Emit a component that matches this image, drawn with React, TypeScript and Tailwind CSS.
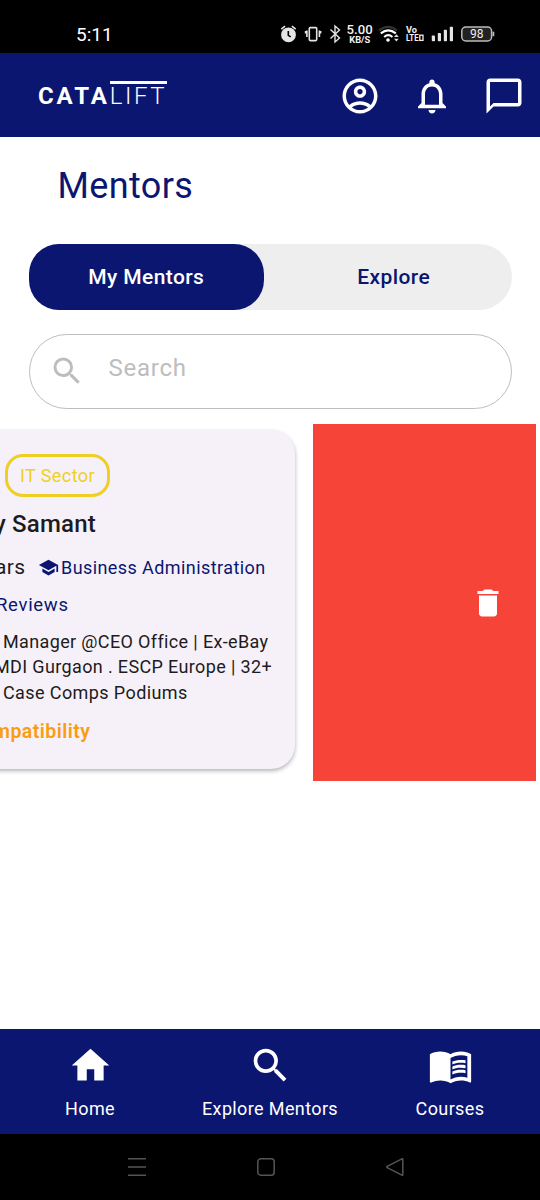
import React from "react";
import {
  MdOutlineAccountCircle,
  MdNotificationsNone,
  MdChatBubbleOutline,
  MdSearch,
  MdHome,
  MdMenuBook,
  MdSchool,
  MdDelete,
} from "react-icons/md";

function StatusBar() {
  return (
    <div className="flex h-[53px] shrink-0 items-end bg-black pb-[5px] pl-[76px] text-white">
      <span className="mb-[4px] w-[203px] text-[19px] leading-[19px] tracking-[0px]">5:11</span>
      <svg className="h-[28px] w-[218px]" viewBox="279 20 218 28" fill="none">
        <g stroke="#e4e4e4" strokeWidth="1.6">
          <circle cx="288.5" cy="34.8" r="7.4" fill="#e4e4e4" stroke="none" />
          <path d="M281.3 29.2l3.8-3M295.7 29.2l-3.8-3" />
          <path d="M288.3 31v4.3l2.4 1.6" stroke="#000" />
          <rect x="309.3" y="27.6" width="7.4" height="13" rx="1" />
          <path d="M306.9 30.5v6.4M319.4 30.5v6.4M305.6 31v2.5M320.6 31v2.5" />
        </g>
        <path d="M330.5 29.5l9 8.5-4.5 4V26l4.5 4-9 8.5" stroke="#e4e4e4" strokeWidth="1.4" />
        <g stroke="#fff" strokeWidth="2.1">
          <path d="M379 30.6q9-7.4 18 0" stroke="#333" />
          <path d="M380.8 33.4q7.5-6.2 15 0" />
          <path d="M384.2 37q4.1-3.6 8.2 0" />
        </g>
        <circle cx="388" cy="40" r="1.8" fill="#fff" />
        <path d="M394 37l2.4-2.8 2.4 2.8zM394 38.8l2.4 2.8 2.4-2.8z" fill="#ddd" />
        <g fill="#f2f2f2" fontFamily="Roboto, sans-serif" fontWeight="500">
          <text x="346.6" y="34.2" fontSize="12.6" textLength="26" lengthAdjust="spacingAndGlyphs">5.00</text>
          <text x="349.3" y="43.2" fontSize="9" fontWeight="700" textLength="21" lengthAdjust="spacingAndGlyphs">KB/S</text>
          <text x="406" y="33.2" fontSize="9" fontWeight="700" textLength="11" lengthAdjust="spacingAndGlyphs">Vo</text>
          <text x="406" y="41" fontSize="9.2" fontWeight="700" textLength="12.6" lengthAdjust="spacingAndGlyphs">LTE</text>
        </g>
        <rect x="419.8" y="35.2" width="3.2" height="5.2" stroke="#eee" strokeWidth="1.3" />
        <g fill="#e4e4e4">
          <rect x="431.8" y="35.5" width="3.2" height="5.8" rx="0.8" />
          <rect x="437.8" y="33" width="3.2" height="8.3" rx="0.8" />
          <rect x="443.8" y="29.7" width="3.2" height="11.6" rx="0.8" />
          <rect x="449.8" y="26.7" width="3.2" height="14.6" rx="0.8" />
        </g>
        <rect x="461.8" y="27" width="29.8" height="14" rx="4" fill="#222" stroke="#bbb" strokeWidth="1.5" />
        <path d="M493.4 31.7v4.5" stroke="#bbb" strokeWidth="1.8" />
        <text x="476.7" y="38.4" fontSize="12" textAnchor="middle" fill="#eee" fontFamily="Roboto, sans-serif">98</text>
      </svg>
    </div>
  );
}

function Header() {
  return (
    <header className="flex h-[84px] shrink-0 items-center justify-between bg-[#0b1670] pr-[15px] pl-[38px] text-white">
      <div className="mt-px flex text-[24px] leading-[24px]">
        <span className="font-bold tracking-[2.9px]">CATA</span>
        <span className="relative font-light tracking-[2.6px]">
          LIFT
          <span className="absolute -top-[3px] left-0 h-[3px] w-[57px] bg-white" />
        </span>
      </div>
      <div className="mt-px flex gap-[30px]">
        <MdOutlineAccountCircle size={42} />
        <MdNotificationsNone size={42} />
        <MdChatBubbleOutline size={42} />
      </div>
    </header>
  );
}

function MentorCard() {
  return (
    <article className="mt-[6px] -ml-[10px] h-[339px] w-[305px] rounded-r-[24px] bg-[#f6f1f9] pt-[24px] pl-[10px] whitespace-nowrap text-[#1d1b20] shadow-[0_2px_4px_rgba(0,0,0,0.3)]">
      <div className="ml-[5px] flex h-[43px] w-[105px] items-center justify-center rounded-[18px] border-[3px] border-[#efcf23] text-[18px] tracking-[0.4px] text-[#efcf23]">
        IT Sector
      </div>
      <h2 className="mt-[12px] -ml-[6px] text-[24px] leading-[30px] font-medium tracking-[0.2px]">y Samant</h2>
      <div className="mt-[13px] flex h-[30px] items-center">
        <span className="mt-[2px] -ml-[5px] w-[43px] text-[21px] tracking-[0.4px]">ars</span>
        <MdSchool size={21} className="text-[#0b1670]" />
        <span className="ml-[2px] text-[18px] tracking-[0.42px] text-[#0b1670]">Business Administration</span>
      </div>
      <div className="mt-[8px] -ml-[4px] text-[18.5px] leading-[30px] tracking-[0.7px] text-[#0b1670]">Reviews</div>
      <p className="mt-[8.5px] text-[18px] leading-[25.5px] tracking-[0.36px]">
        <span className="ml-[3px] block">Manager @CEO Office | Ex-eBay</span>
        <span className="-ml-[6px] block">MDI Gurgaon . ESCP Europe | 32+</span>
        <span className="ml-[3px] block tracking-[0.4px]">Case Comps Podiums</span>
      </p>
      <div className="mt-[11.5px] -ml-[7px] text-[19.5px] leading-[30px] font-semibold tracking-[0.45px] text-[#f99c12]">mpatibility</div>
    </article>
  );
}

function NavItem({ icon, label }: { icon: React.ReactNode; label: string }) {
  return (
    <div className="flex flex-1 flex-col items-center pt-[14px]">
      {icon}
      <span className="mt-[6px] text-[18px] leading-[30px] tracking-[0.375px]">{label}</span>
    </div>
  );
}

export default function App() {
  return (
    <div className="flex h-[1200px] w-[540px] flex-col overflow-hidden bg-white font-['Roboto',sans-serif]">
      <StatusBar />
      <Header />
      <main className="flex flex-1 flex-col">
        <h1 className="mt-[22px] ml-[57.5px] text-[36px] leading-[54px] tracking-[0.375px] text-[#0b1670]">Mentors</h1>
        <div className="mt-[31px] mr-[28.5px] ml-[28.5px] flex h-[66px] rounded-[33px] bg-[#eeeeee] text-[21px] font-medium tracking-[0.4px]">
          <button className="w-[235.5px] rounded-[30px] bg-[#0b1670] pt-[2px] text-white">My Mentors</button>
          <button className="flex-1 pt-[2px] pl-[12px] text-[#0b1670]">Explore</button>
        </div>
        <div className="mt-[24px] mr-[28.5px] ml-[28.5px] flex h-[75px] items-center rounded-full border-[1.5px] border-[#bdbdbd] pl-[19px] text-[#bdbdbd]">
          <MdSearch size={36} className="mb-px" />
          <span className="mb-[7px] ml-[24px] text-[24px] tracking-[0.75px]">Search</span>
        </div>
        <section className="mt-[15px] flex justify-between pr-[4.5px]">
          <MentorCard />
          <div className="flex h-[357px] w-[223px] items-center justify-end bg-[#f64438] pr-[30px] text-white">
            <MdDelete size={36} />
          </div>
        </section>
      </main>
      <nav className="flex h-[105px] shrink-0 bg-[#0b1670] text-white">
        <NavItem icon={<MdHome size={45} />} label="Home" />
        <NavItem icon={<MdSearch size={45} />} label="Explore Mentors" />
        <NavItem icon={<MdMenuBook size={45} />} label="Courses" />
      </nav>
      <div className="flex h-[66px] shrink-0 items-center bg-black pl-[127px] text-[#555]">
        <svg width="20" height="20" viewBox="0 0 20 20" fill="none" stroke="currentColor" strokeWidth="1.5">
          <path d="M1 1.8h18M1 10h18M1 18.2h18" />
        </svg>
        <svg className="ml-[109px]" width="20" height="20" viewBox="0 0 20 20" fill="none" stroke="currentColor" strokeWidth="1.5">
          <rect x="1.8" y="1.8" width="16.4" height="16.4" rx="3" />
        </svg>
        <svg className="ml-[109px]" width="20" height="20" viewBox="0 0 20 20" fill="none" stroke="currentColor" strokeWidth="1.5" strokeLinejoin="round">
          <path d="M17.8 2.2v15.6q0 .8-.9.4L2.2 10.7q-1-.7 0-1.4L16.9 1.8q.9-.4.9.4z" />
        </svg>
      </div>
    </div>
  );
}
